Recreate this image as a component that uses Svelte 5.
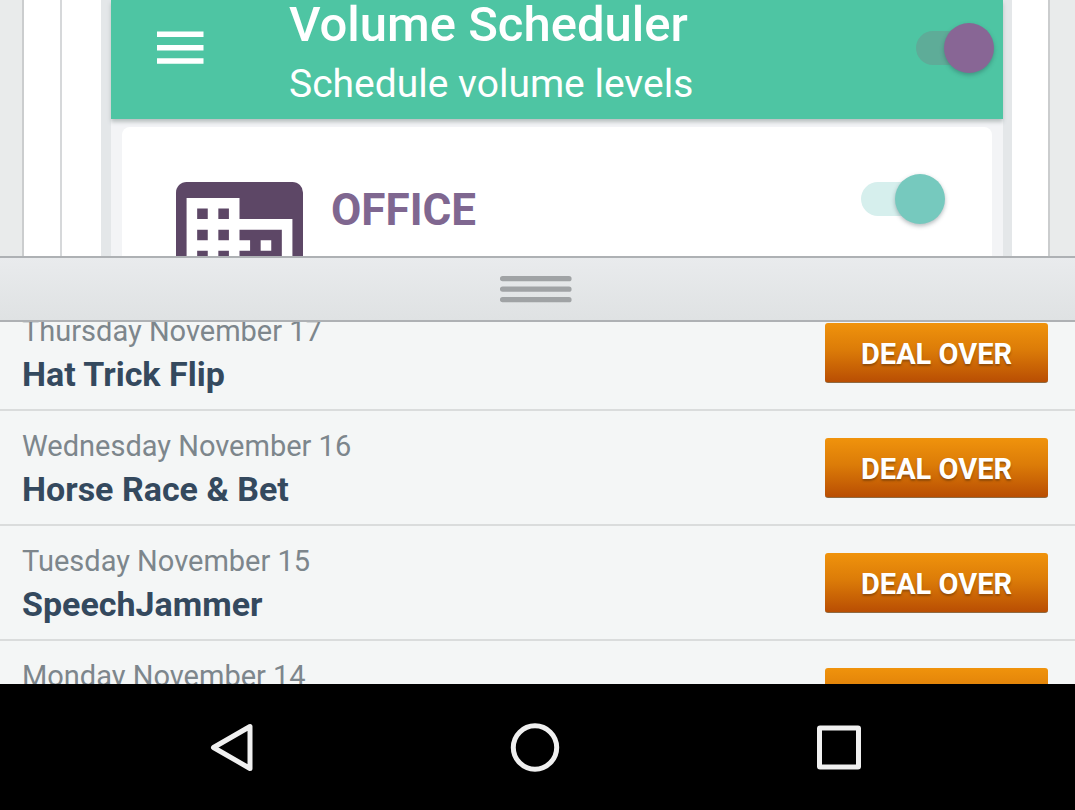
<script>
  const deals = [
    { date: 'Thursday November 17', title: 'Hat Trick Flip' },
    { date: 'Wednesday November 16', title: 'Horse Race & Bet' },
    { date: 'Tuesday November 15', title: 'SpeechJammer' },
    { date: 'Monday November 14', title: '' }
  ];
  let scheduler = $state(true);
  let office = $state(true);
</script>

<div class="screen">
  <section class="preview">
    <div class="sheet">
      <div class="inner">
        <div class="app">
          <header>
            <button class="menu" aria-label="Menu">
              <svg width="48" height="36" viewBox="0 0 48 36"><path d="M0 4.300h46.500M0 17.700h46.500M0 31h46.500" stroke="#fff" stroke-width="5.4" /></svg>
            </button>
            <div class="heading">
              <h1>Volume Scheduler</h1>
              <p>Schedule volume levels</p>
            </div>
            <input class="switch purple" type="checkbox" aria-label="Volume Scheduler" bind:checked={scheduler} />
          </header>
          <div class="card">
            <svg class="building" width="127" height="127" viewBox="0 0 24 24">
              <rect width="24" height="24" rx="2" fill="#5d4766" />
              <path fill="#fff" d="M12 7V3H2v18h20V7H12zM6 19H4v-2h2v2zm0-4H4v-2h2v2zm0-4H4V9h2v2zm0-4H4V5h2v2zm4 12H8v-2h2v2zm0-4H8v-2h2v2zm0-4H8V9h2v2zm0-4H8V5h2v2zm10 12h-8v-2h2v-2h-2v-2h2v-2h-2V9h8v10zm-2-8h-2v2h2v-2zm0 4h-2v2h2v-2z" />
            </svg>
            <label for="office">OFFICE</label>
            <input id="office" class="switch teal" type="checkbox" bind:checked={office} />
          </div>
        </div>
      </div>
    </div>
  </section>

  <button class="handle" aria-label="Resize panel">
    <svg width="72" height="28" viewBox="0 0 72 28"><path d="M2.500 3.700h66.500M2.500 14.200h66.500M2.500 24.700h66.500" stroke="#a0a3a5" stroke-width="5.2" stroke-linecap="round" /></svg>
  </button>

  <main>
    <ul>
      {#each deals as deal}
        <li>
          <div class="info">
            <span class="date">{deal.date}</span>
            <strong>{deal.title}</strong>
          </div>
          <button class="deal">DEAL OVER</button>
        </li>
      {/each}
    </ul>
  </main>

  <nav>
    <button aria-label="Back">
      <svg width="50" height="50" viewBox="0 0 50 50"><path d="M7.500 25.500L44 4.500V46.500Z" /></svg>
    </button>
    <button aria-label="Home">
      <svg width="50" height="50" viewBox="0 0 50 50"><circle cx="25" cy="25.500" r="21.700" /></svg>
    </button>
    <button aria-label="Recent apps">
      <svg width="50" height="50" viewBox="0 0 50 50"><rect x="5.500" y="6" width="39" height="39" rx="0.500" /></svg>
    </button>
  </nav>
</div>

<style>
  :global(body) { margin: 0; }
  * { box-sizing: border-box; }
  .screen {
    display: flex;
    flex-direction: column;
    height: 100vh;
    overflow: hidden;
    font-family: Roboto, sans-serif;
    background: #f4f6f6;
  }
  button { font: inherit; border: 0; padding: 0; background: none; cursor: pointer; }
  svg { display: block; }

  .preview {
    flex: 0 0 256px;
    display: flex;
    overflow: hidden;
    padding: 0 25px 0 22px;
    background: #e9ebeb;
  }
  .sheet {
    flex: 1;
    min-width: 0;
    display: flex;
    padding-left: 36px;
    border: solid #cbcdce;
    border-width: 0 2px;
    background: #fff;
  }
  .inner {
    flex: 1;
    min-width: 0;
    display: flex;
    padding: 0 36px 0 39px;
    border-left: 2px solid #d6d8da;
  }
  .app {
    flex: 1;
    min-width: 0;
    display: flex;
    flex-direction: column;
    border: solid #e4e7e9;
    border-width: 0 9px 0 10px;
    background: #f3f4f6;
  }
  header {
    flex: 0 0 118px;
    display: flex;
    align-items: flex-start;
    padding: 0 9px 0 46px;
    background: #4ec5a3;
    box-shadow: 0 3px 4px #b9bfc0;
    color: #fff;
  }
  .menu { margin-top: 30px; }
  .heading { flex: 1; min-width: 0; padding-left: 84px; }
  h1, p { margin: 0; white-space: nowrap; }
  h1 { font-size: 49px; line-height: 50px; font-weight: 500; }
  p { font-size: 39px; line-height: 69px; }

  .switch {
    appearance: none;
    position: relative;
    flex: none;
    width: 78px;
    height: 50px;
    margin: 0;
    cursor: pointer;
  }
  .switch::before {
    content: '';
    position: absolute;
    inset: 8px 20px 8px 0;
    border-radius: 17px;
  }
  .switch::after {
    content: '';
    position: absolute;
    top: 0;
    left: 0;
    width: 50px;
    height: 50px;
    border-radius: 50%;
    box-shadow: 0 2px 4px rgb(40 60 70 / 35%);
  }
  .switch:checked::after { left: auto; right: 0; }
  .purple { margin-top: 23px; }
  .purple::before { background: #5eac98; }
  .purple::after { background: #886695; }
  .teal { width: 84px; }
  .teal::before { background: #d6efed; }
  .teal::after { background: #76c9be; }

  .card {
    flex: 0 0 220px;
    display: flex;
    align-items: flex-start;
    margin: 8px 11px 0;
    padding: 47px 47px 0 54px;
    border-radius: 8px;
    background: #fff;
  }
  .building { margin-top: 8px; }
  label {
    flex: 1;
    padding-left: 28px;
    font-size: 44px;
    line-height: 72px;
    font-weight: 700;
    color: #7f6790;
  }

  .handle {
    flex: 0 0 66px;
    display: flex;
    align-items: center;
    justify-content: center;
    padding-right: 4px;
    border: solid #aeb1b4;
    border-width: 2px 0;
    background: linear-gradient(#e9ebed, #dfe2e3);
  }

  main { flex: 1; min-height: 0; overflow: hidden; }
  ul { list-style: none; margin: -26px 0 0; padding: 0; }
  li {
    display: flex;
    align-items: center;
    justify-content: space-between;
    height: 115px;
    padding: 0 27px 0 22px;
    border-bottom: 2px solid #dadcdc;
  }
  .date, strong { display: block; white-space: nowrap; }
  .date { font-size: 29px; line-height: 42px; color: #7d868c; }
  strong { height: 44px; font-size: 34px; line-height: 44px; font-weight: 700; color: #34495e; }
  .deal {
    width: 223px;
    height: 60px;
    padding-top: 4px;
    border-radius: 3px;
    border-bottom: 1px solid #8f6a42;
    background: linear-gradient(#f0930c, #dc7c08 45%, #b94e03);
    color: #fff;
    font-size: 29px;
    font-weight: 700;
    text-shadow: 0 2px 2px rgb(90 50 10 / 50%);
  }

  nav {
    flex: 0 0 126px;
    display: flex;
    align-items: center;
    justify-content: center;
    gap: 204px;
    padding-right: 6px;
    background: #000;
  }
  nav button { display: flex; justify-content: center; width: 100px; }
  nav svg { fill: none; stroke: #f0f0f0; stroke-width: 5; stroke-linejoin: round; }
</style>
